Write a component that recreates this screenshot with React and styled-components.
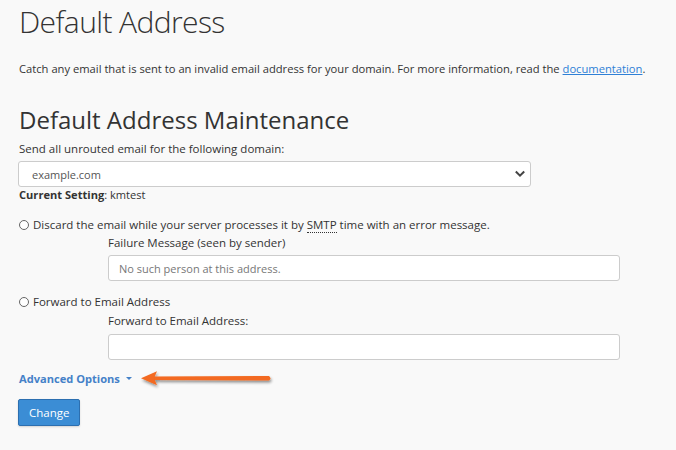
import React from "react";
import styled, { createGlobalStyle } from "styled-components";

const GlobalStyle = createGlobalStyle`
  html, body {
    margin: 0;
    background: #f9f9f9;
  }
  body {
    font-family: "Open Sans", "Liberation Sans", sans-serif;
    font-size: 11.5px;
    color: #333;
  }
`;

const Page = styled.div`
  padding: 4px 18px 0 19px;
  width: 676px;
  height: 450px;
  box-sizing: border-box;
  overflow: hidden;
`;

const Title = styled.h1`
  margin: 0;
  font-size: 30px;
  line-height: 35px;
  font-weight: 300;
  letter-spacing: -0.6px;
  color: #333;
`;

const Lead = styled.p`
  margin: 21px 0 0;
  font-size: 11.2px;
  line-height: 17px;
  white-space: nowrap;

  a {
    color: #2f80d6;
    text-decoration: underline;
  }
`;

const Subtitle = styled.h2`
  margin: 30px 0 0;
  font-size: 24px;
  line-height: 26px;
  font-weight: 400;
`;

const Label = styled.div`
  margin: ${(p) => p.$top || 0}px 0 0 ${(p) => (p.$indent ? 89 : 0)}px;
  line-height: 17px;
`;

const SelectBox = styled.div`
  margin: 4px 0 0 -1px;
  width: 513px;
  height: 26px;
  box-sizing: border-box;
  border: 1px solid #ccc;
  border-radius: 3px;
  background: #fff;
  display: flex;
  align-items: center;
  justify-content: space-between;
  padding: 0 4px 0 13px;
  color: #555;
  font-size: 11px;
`;

const Current = styled.div`
  line-height: 15px;
  font-size: 11.1px;

  strong {
    font-weight: 700;
  }
`;

const RadioRow = styled.label`
  margin-top: ${(p) => p.$top}px;
  display: flex;
  align-items: center;
  gap: 4px;
  line-height: 17px;
`;

const Radio = styled.span`
  width: 8px;
  height: 8px;
  border: 1px solid #666;
  border-radius: 50%;
  background: #fff;
  flex: none;
`;

const Abbr = styled.span`
  border-bottom: 1px dotted #333;
  line-height: 13px;
`;

const TextInput = styled.div`
  margin: ${(p) => p.$top}px 0 0 89px;
  width: 512px;
  height: 26px;
  box-sizing: border-box;
  border: 1px solid #ccc;
  border-radius: 3px;
  background: #fff;
  display: flex;
  align-items: center;
  padding: 0 10px;
  color: #777;
  font-size: 11px;
`;

const AdvancedRow = styled.div`
  margin-top: 10px;
  display: flex;
  align-items: center;
  height: 17px;
`;

const AdvancedLink = styled.span`
  color: #4581c8;
  font-weight: 700;
  font-size: 11.1px;
  display: flex;
  align-items: center;
  gap: 6px;
`;

const Caret = styled.span`
  width: 0;
  height: 0;
  border-left: 3px solid transparent;
  border-right: 3px solid transparent;
  border-top: 3px solid #4581c8;
`;

const Arrow = styled.svg`
  margin-left: 8px;
  flex: none;
`;

const Button = styled.button`
  display: block;
  margin: 12px 0 0 -1px;
  height: 27px;
  padding: 0 10px;
  border: 1px solid #2c6fb0;
  border-radius: 2px;
  background: #3b8dd5;
  color: #fff;
  font-family: inherit;
  font-size: 11.5px;
  box-shadow: 0 1px 2px rgba(0, 0, 0, 0.15);
`;

export default function App() {
  return (
    <>
      <GlobalStyle />
      <Page>
        <Title>Default Address</Title>
        <Lead>
          Catch any email that is sent to an invalid email address for your
          domain. For more information, read the <a>documentation</a>.
        </Lead>
        <Subtitle>Default Address Maintenance</Subtitle>
        <Label $top={7}>Send all unrouted email for the following domain:</Label>
        <SelectBox>
          <span>example.com</span>
          <svg width="12" height="8" viewBox="0 0 12 8">
            <path d="M1.8 1.5 L6 5.7 L10.2 1.5" fill="none" stroke="#444" strokeWidth="2" />
          </svg>
        </SelectBox>
        <Current>
          <strong>Current Setting</strong>: kmtest
        </Current>
        <RadioRow $top={14}>
          <Radio />
          <span>
            Discard the email while your server processes it by <Abbr>SMTP</Abbr>{" "}
            time with an error message.
          </span>
        </RadioRow>
        <Label $indent $top={1}>Failure Message (seen by sender)</Label>
        <TextInput $top={4}>No such person at this address.</TextInput>
        <RadioRow $top={12}>
          <Radio />
          <span>Forward to Email Address</span>
        </RadioRow>
        <Label $indent $top={2}>Forward to Email Address:</Label>
        <TextInput $top={5} />
        <AdvancedRow>
          <AdvancedLink>
            Advanced Options <Caret />
          </AdvancedLink>
          <Arrow width="136" height="22" viewBox="0 0 136 22">
            <defs>
              <filter id="sh" x="-10%" y="-50%" width="120%" height="200%">
                <feGaussianBlur in="SourceAlpha" stdDeviation="1.5" />
                <feOffset dx="1" dy="2" result="b" />
                <feComponentTransfer>
                  <feFuncA type="linear" slope="0.45" />
                </feComponentTransfer>
                <feMerge>
                  <feMergeNode />
                  <feMergeNode in="SourceGraphic" />
                </feMerge>
              </filter>
            </defs>
            <g filter="url(#sh)">
              <path d="M14 8.6 L129 8 Q131.8 10.3 129 12.6 L14 12 Z" fill="#f36a20" />
              <path d="M1 10.3 L17 3.3 L14 10.3 L17 17.3 Z" fill="#f36a20" />
            </g>
          </Arrow>
        </AdvancedRow>
        <Button>Change</Button>
      </Page>
    </>
  );
}
